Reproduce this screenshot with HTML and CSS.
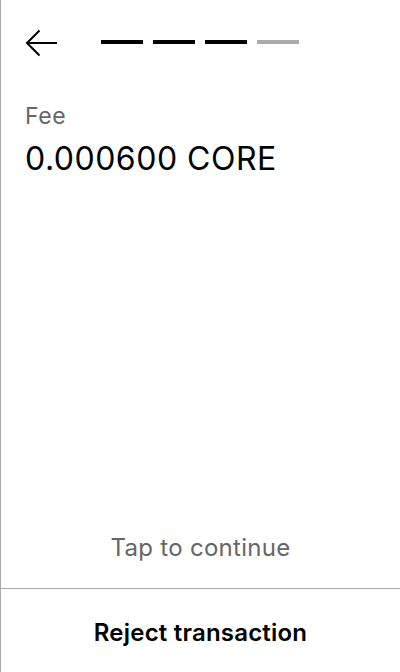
FILE: index.html
```html
<!DOCTYPE html>
<html>
<head>
<meta charset="utf-8">
<link rel="stylesheet" href="styles.css">
</head>
<body>
<div class="screen">
  <header class="top">
    <svg class="back" width="34" height="28" viewBox="0 0 34 28">
      <path d="M33 14H3M15.5 1.5L3 14L15.5 26.5" fill="none" stroke="#000" stroke-width="2"/>
    </svg>
    <div class="steps">
      <span class="step on"></span>
      <span class="step on"></span>
      <span class="step on"></span>
      <span class="step"></span>
    </div>
  </header>
  <main class="content">
    <div class="label">Fee</div>
    <div class="value">0.000600 CORE</div>
  </main>
  <div class="tap">Tap to continue</div>
  <footer class="reject">Reject transaction</footer>
</div>
</body>
</html>
```
FILE: styles.css
```css
html, body {
  margin: 0;
  padding: 0;
  background: #fff;
}
body {
  font-family: Inter, "Noto Sans", sans-serif;
  color: #000;
}
.screen {
  width: 399px;
  height: 672px;
  border-left: 1px solid #aaa;
  display: flex;
  flex-direction: column;
}
.top {
  display: flex;
  align-items: center;
  padding: 29px 0 0 23px;
  height: 28px;
}
.back {
  display: block;
}
.steps {
  display: flex;
  gap: 10px;
  margin-left: 43px;
  margin-bottom: 2px;
}
.step {
  width: 42px;
  height: 4px;
  background: #aaa;
}
.step.on {
  background: #000;
}
.content {
  padding: 45px 24px 0 24px;
  flex: 1;
}
.label {
  font-size: 23px;
  line-height: 29px;
  letter-spacing: 0.6px;
  color: #666;
}
.value {
  margin-top: 8px;
  font-size: 32px;
  line-height: 39px;
  letter-spacing: 0.5px;
}
.tap {
  text-align: center;
  font-size: 24px;
  line-height: 29px;
  letter-spacing: 0.3px;
  color: #666;
  padding-bottom: 26px;
}
.reject {
  border-top: 1px solid #aaa;
  height: 80px;
  padding-top: 3px;
  display: flex;
  align-items: center;
  justify-content: center;
  font-size: 24px;
  letter-spacing: 0.2px;
  font-weight: 600;
}
```
